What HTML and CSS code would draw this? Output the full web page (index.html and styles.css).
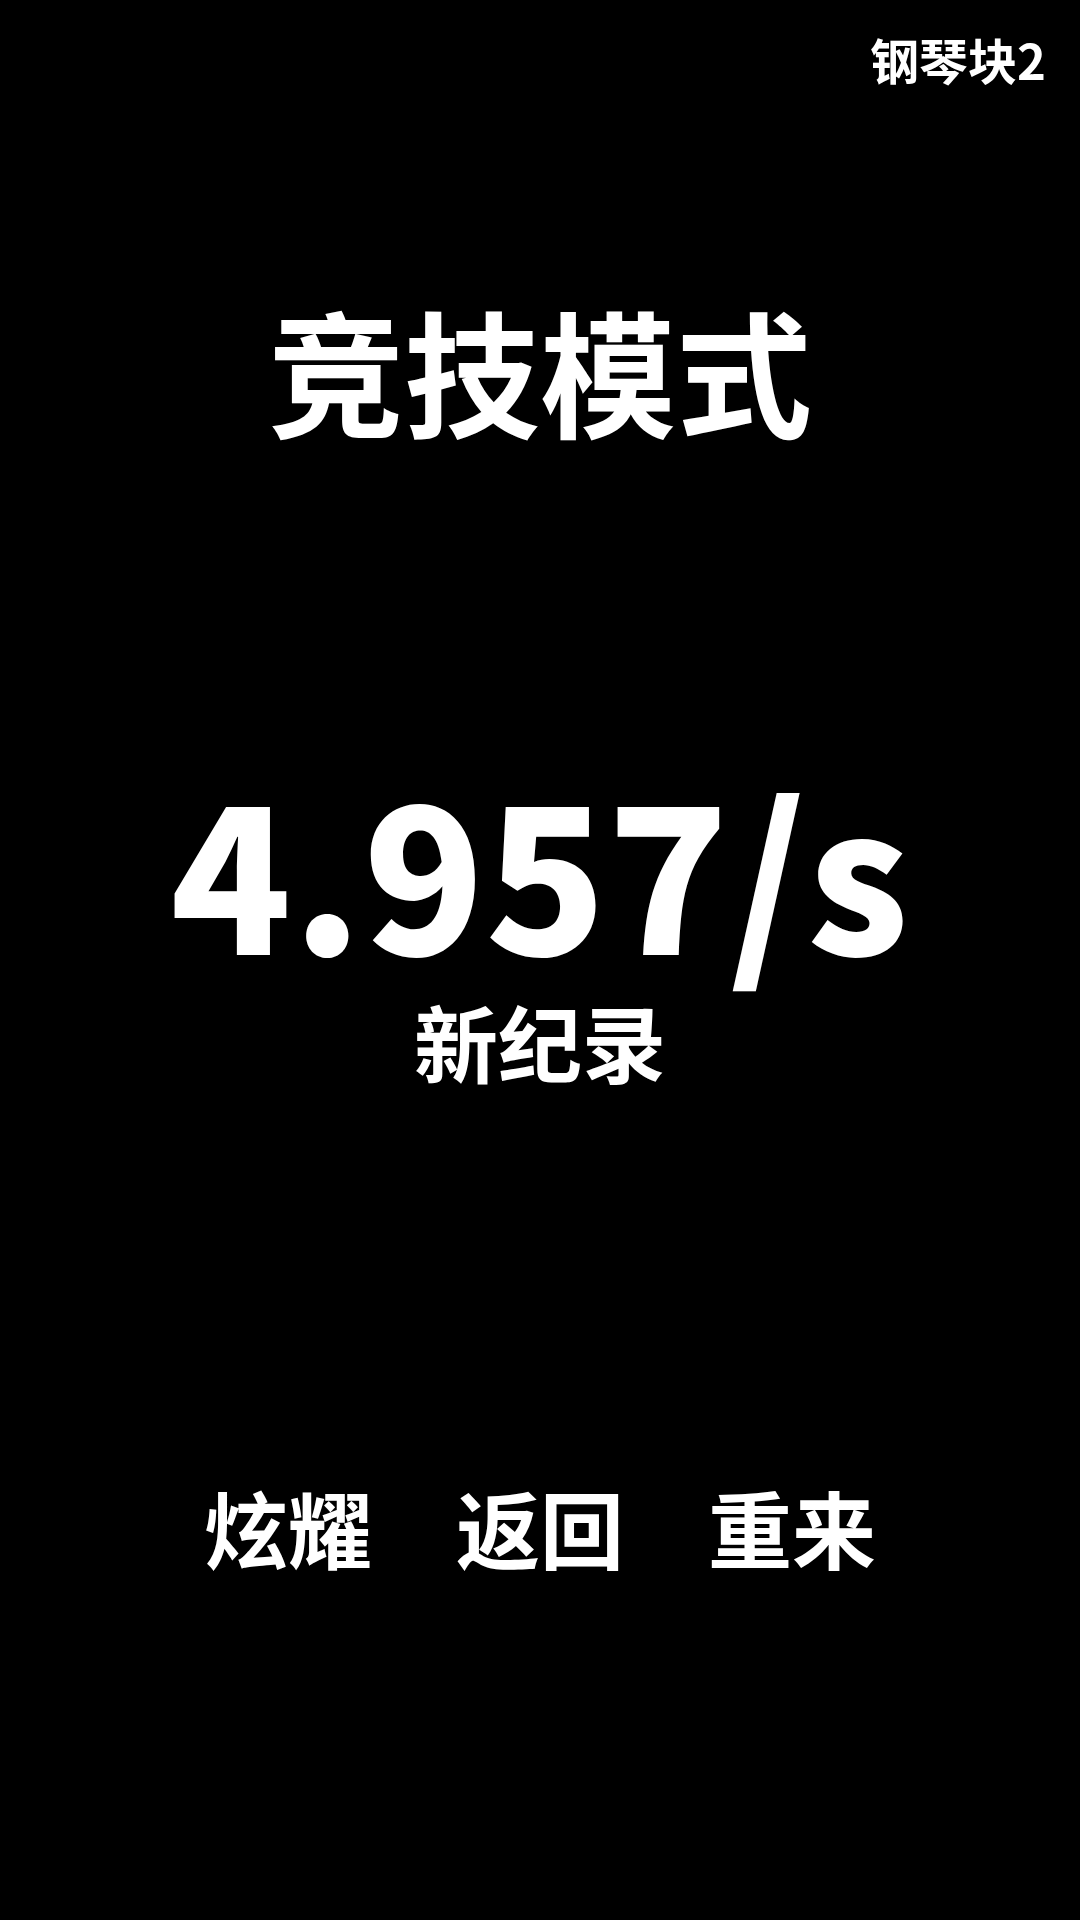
FILE: index.html
```html
<!DOCTYPE html>
<html lang="zh-CN">
<head>
<meta charset="utf-8">
<title>钢琴块2</title>
<link rel="stylesheet" href="styles.css">
</head>
<body>
<div class="screen">
  <header class="topbar"><span class="brand">钢琴块2</span></header>
  <h1 class="mode">竞技模式</h1>
  <div class="score">4.957/s</div>
  <div class="record">新纪录</div>
  <nav class="actions">
    <span class="action">炫耀</span>
    <span class="action">返回</span>
    <span class="action">重来</span>
  </nav>
</div>
</body>
</html>
```

FILE: styles.css
```css
html, body {
  margin: 0;
  padding: 0;
  background: #000;
}
.screen {
  width: 1080px;
  height: 1920px;
  background: #000;
  color: #fff;
  font-family: "Noto Sans CJK SC", "Noto Sans", sans-serif;
  font-weight: 700;
  display: flex;
  flex-direction: column;
  align-items: center;
  overflow: hidden;
}
.topbar {
  align-self: stretch;
  display: flex;
  justify-content: flex-end;
  padding: 34px 34px 0 0;
}
.brand {
  font-size: 49px;
  line-height: 1;
}
.mode {
  margin: 218px 0 0;
  font-size: 136px;
  line-height: 1;
  font-weight: 700;
}
.score {
  margin: 332px 0 0;
  font-size: 199px;
  line-height: 1;
  font-weight: 900;
  letter-spacing: 1px;
}
.record {
  margin: 31px 0 0;
  font-size: 84px;
  line-height: 1;
}
.actions {
  margin: 402px 0 0;
  display: flex;
  gap: 84px;
  font-size: 84px;
  line-height: 1;
}
.action {
  display: block;
}
```
